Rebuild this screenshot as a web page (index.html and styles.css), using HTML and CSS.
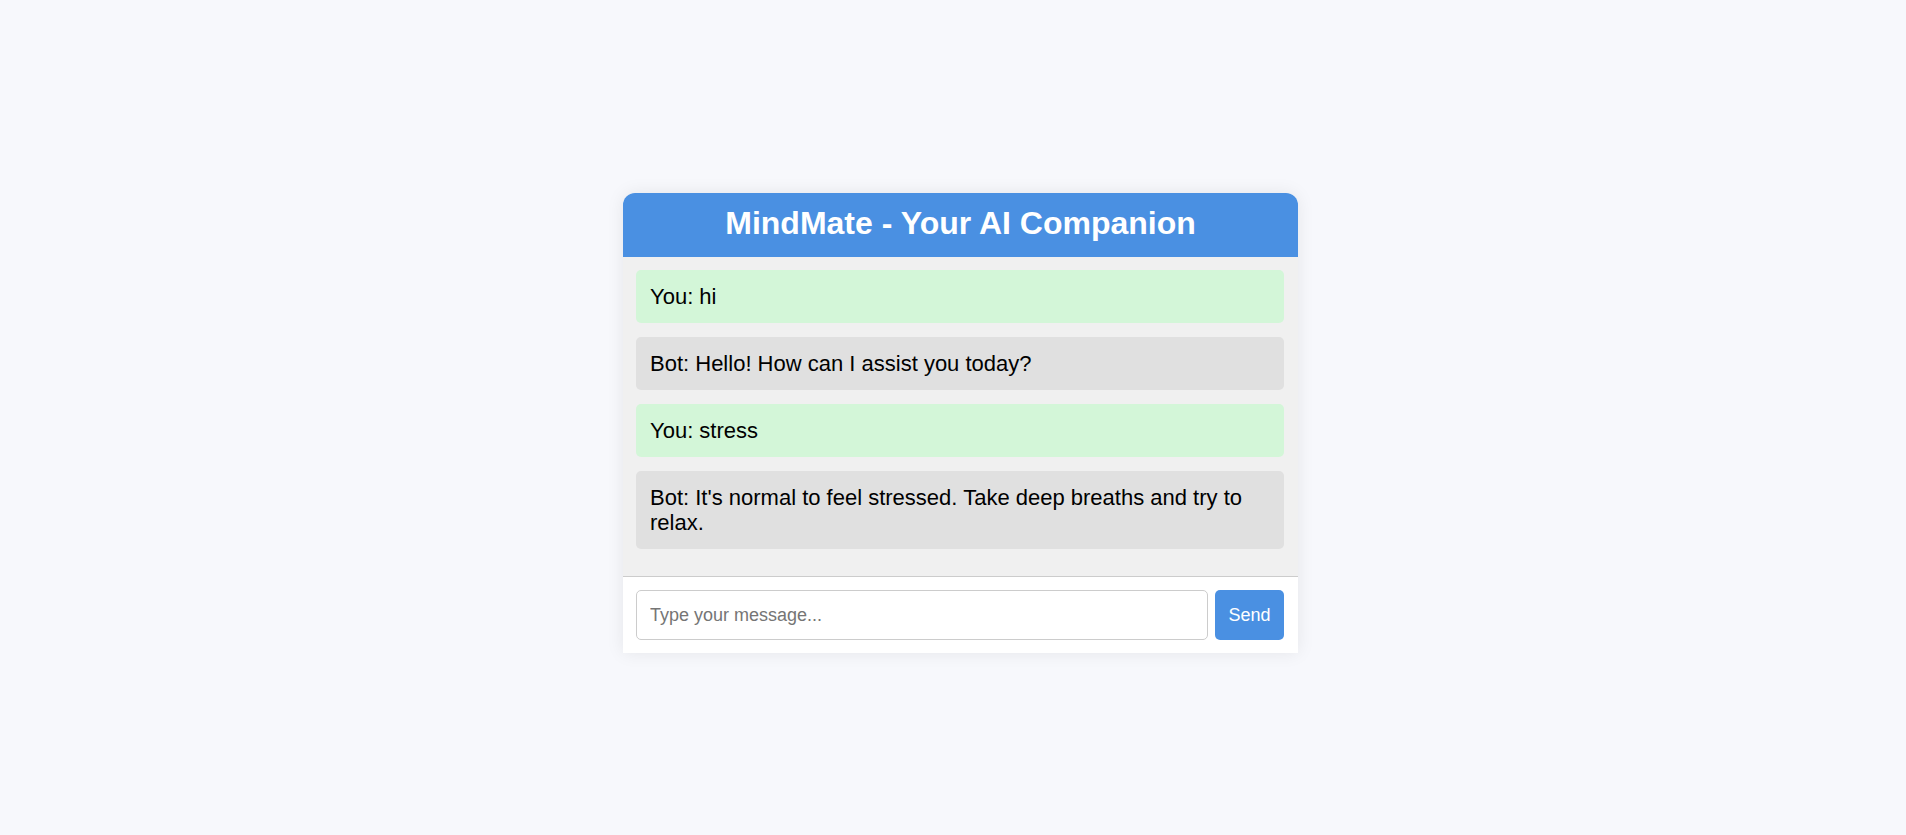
FILE: index.html
```html
<!DOCTYPE html>
<html lang="en">
<head>
<meta charset="UTF-8">
<title>MindMate - Your AI Companion</title>
<link rel="stylesheet" href="styles.css">
</head>
<body>
<div class="page">
  <div class="chat-card">
    <div class="chat-header">
      <h1 class="chat-title">MindMate - Your AI Companion</h1>
    </div>
    <div class="chat-box">
      <div class="msg msg-user">You: hi</div>
      <div class="msg msg-bot">Bot: Hello! How can I assist you today?</div>
      <div class="msg msg-user">You: stress</div>
      <div class="msg msg-bot">Bot: It's normal to feel stressed. Take deep breaths and try to relax.</div>
    </div>
    <div class="input-row">
      <input class="msg-input" type="text" placeholder="Type your message...">
      <button class="send-btn" type="button">Send</button>
    </div>
  </div>
</div>
</body>
</html>
```

FILE: styles.css
```css
html, body {
  margin: 0;
  padding: 0;
}
body {
  background: #f7f8fc;
  font-family: "Liberation Sans", Arial, sans-serif;
  color: #000;
}
.page {
  width: 1906px;
  height: 835px;
  box-sizing: border-box;
  padding: 193px 0 0 623px;
}
.chat-card {
  width: 675px;
  background: #fff;
  border-radius: 12px 12px 0 0;
  box-shadow: 0 0 18px rgba(0, 0, 0, 0.08);
  display: flex;
  flex-direction: column;
}
.chat-header {
  background: #4a90e2;
  border-radius: 12px 12px 0 0;
  padding: 12px 0 15px;
  text-align: center;
}
.chat-title {
  margin: 0;
  color: #fff;
  font-size: 32px;
  line-height: 37px;
  font-weight: bold;
}
.chat-box {
  background: #f0f0f0;
  padding: 13px 14px 13px 13px;
  display: flex;
  flex-direction: column;
  gap: 14px;
}
.chat-box::after {
  content: "";
  height: 0;
}
.msg {
  font-size: 22px;
  line-height: 25px;
  padding: 14px 14px;
  border-radius: 5px;
}
.msg-user {
  background: #d3f6d8;
}
.msg-bot {
  background: #e0e0e0;
}
.input-row {
  border-top: 1px solid #cccccc;
  padding: 13px 14px 13px 13px;
  display: flex;
  gap: 7px;
  background: #fff;
}
.msg-input {
  flex: 1;
  height: 50px;
  box-sizing: border-box;
  border: 1px solid #cccccc;
  border-radius: 5px;
  padding: 0 13px;
  font-family: "Liberation Sans", Arial, sans-serif;
  font-size: 18px;
  color: #000;
  outline: none;
}
.msg-input::placeholder {
  color: #757575;
}
.send-btn {
  width: 69px;
  height: 50px;
  border: none;
  border-radius: 5px;
  background: #4a90e2;
  color: #fff;
  font-family: "Liberation Sans", Arial, sans-serif;
  font-size: 18px;
  padding: 0;
  cursor: pointer;
}
```
